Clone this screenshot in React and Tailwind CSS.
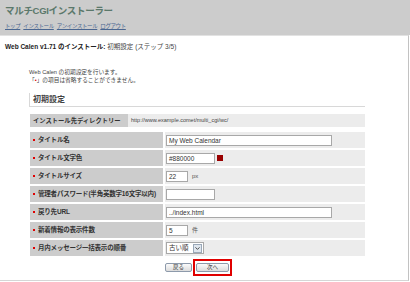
import { ChevronDown } from 'lucide-react'

const rows = [
  { label: 'タイトル名', kind: 'wide', value: 'My Web Calendar' },
  { label: 'タイトル文字色', kind: 'color', value: '#880000' },
  { label: 'タイトルサイズ', kind: 'unit', value: '22', unit: 'px' },
  { label: '管理者パスワード(半角英数字16文字以内)', kind: 'mid', value: '' },
  { label: '戻り先URL', kind: 'wide', value: '../index.html' },
  { label: '新着情報の表示件数', kind: 'unit', value: '5', unit: '件' },
  { label: '月内メッセージ一括表示の順番', kind: 'select', value: '古い順' },
]

function Field({ row }) {
  const box = 'h-[11px] bg-white border border-[#a8a8a8] text-[6.5px] leading-[9px] px-[2px] text-[#333] flex items-center'
  if (row.kind === 'wide') return <div className={`${box} w-[166px]`}>{row.value}</div>
  if (row.kind === 'mid') return <div className={`${box} w-[49px]`}>{row.value}</div>
  if (row.kind === 'color')
    return (
      <div className="flex items-center gap-[2px]">
        <div className={`${box} w-[49px]`}>{row.value}</div>
        <span className="w-[6px] h-[6px] bg-[#990000]" />
      </div>
    )
  if (row.kind === 'unit')
    return (
      <div className="flex items-center gap-[4px]">
        <div className={`${box} w-[22px]`}>{row.value}</div>
        <span className="text-[6px] text-[#555]">{row.unit}</span>
      </div>
    )
  return (
    <div className="h-[12px] w-[38px] bg-white border border-[#a8a8a8] flex items-center justify-between pl-[2px] pr-[1px]">
      <span className="text-[6.5px] text-[#333]">{row.value}</span>
      <span className="w-[9px] h-[9px] bg-[#dfe6ee] border border-[#9aa8b8] flex items-center justify-center">
        <ChevronDown size={7} strokeWidth={3} className="text-[#333]" />
      </span>
    </div>
  )
}

export default function App() {
  return (
    <div className="w-[410px] h-[282px] bg-white overflow-hidden font-['Liberation_Sans','Noto_Sans_CJK_JP',sans-serif]">
      {/* header */}
      <div className="h-[35px] bg-[#cccccc] px-[5px] pt-[5px]">
        <div className="text-[9.5px] leading-[11px] font-bold text-[#5b786b] tracking-[-0.3px]">
          マルチCGIインストーラー
        </div>
        <div className="mt-[7px] flex gap-[3px] text-[5.5px] leading-[7px] text-[#4a6690] underline tracking-[-0.4px]">
          <span>トップ</span>
          <span>インストール</span>
          <span>アンインストール</span>
          <span>ログアウト</span>
        </div>
      </div>

      <div className="w-[409px] h-[246px] border-t border-t-[#e2e2e2] border-r border-r-[#c2c2c2] border-b border-b-[#d6d6d6]">
        <div className="pl-[5px] pt-[6px] text-[6.5px] leading-[9px] text-[#222]">
          <span className="font-bold">Web Calen v1.71 のインストール: </span>
          <span className="text-[#444]">初期設定 (ステップ 3/5)</span>
        </div>

        <div className="pl-[29px] pt-[17px] text-[5.7px] leading-[8px] text-[#444]">
          <div>Web Calen の初期設定を行います。</div>
          <div>
            「<span className="text-[#e00000]">•</span>」の項目は省略することができません。
          </div>
        </div>

        <div className="ml-[29px] mt-[9px] w-[336px] h-[14px] border-l border-l-[#d8d8d8] border-b border-b-[#d8d8d8] pl-[3px] flex items-center text-[8px] font-bold text-[#444]">
          初期設定
        </div>

        <div className="ml-[30px] mt-[7px] w-[335px] h-[13px] flex bg-[#ececec]">
          <div className="w-[98px] bg-[#cccccc] pl-[3px] flex items-center text-[6.3px] font-bold text-[#333]">
            インストール先ディレクトリー
          </div>
          <div className="pl-[3px] flex items-center text-[5.5px] text-[#444]">
            http://www.example.comet/multi_cgi/wc/
          </div>
        </div>

        <div className="ml-[30px] mt-[5px] w-[335px] flex flex-col gap-[2px]">
          {rows.map((r) => (
            <div key={r.label} className="h-[16px] flex gap-[2px]">
              <div className="w-[133px] bg-[#cccccc] pl-[3px] flex items-center gap-[3px] text-[6.5px] font-bold text-[#333] whitespace-nowrap tracking-[-0.2px]">
                <span className="w-[2px] h-[2px] bg-[#e00000]" />
                {r.label}
              </div>
              <div className="flex-1 bg-[#ececec] pl-[1px] flex items-center">
                <Field row={r} />
              </div>
            </div>
          ))}
        </div>

        <div className="ml-[165px] mt-[3px] flex items-center gap-[1px]">
          <button className="w-[27px] h-[9px] rounded-[2px] border border-[#8d9aab] bg-gradient-to-b from-[#fbfbfb] to-[#dcdcdc] text-[5.5px] leading-none text-[#333]">
            戻る
          </button>
          <span className="px-[1px] py-[2px] border-2 border-[#e00000]">
            <button className="w-[33px] h-[9px] rounded-[2px] border border-[#8d9aab] bg-gradient-to-b from-[#fbfbfb] to-[#dcdcdc] text-[5.5px] leading-none text-[#333] block">
              次へ
            </button>
          </span>
        </div>
      </div>
    </div>
  )
}
